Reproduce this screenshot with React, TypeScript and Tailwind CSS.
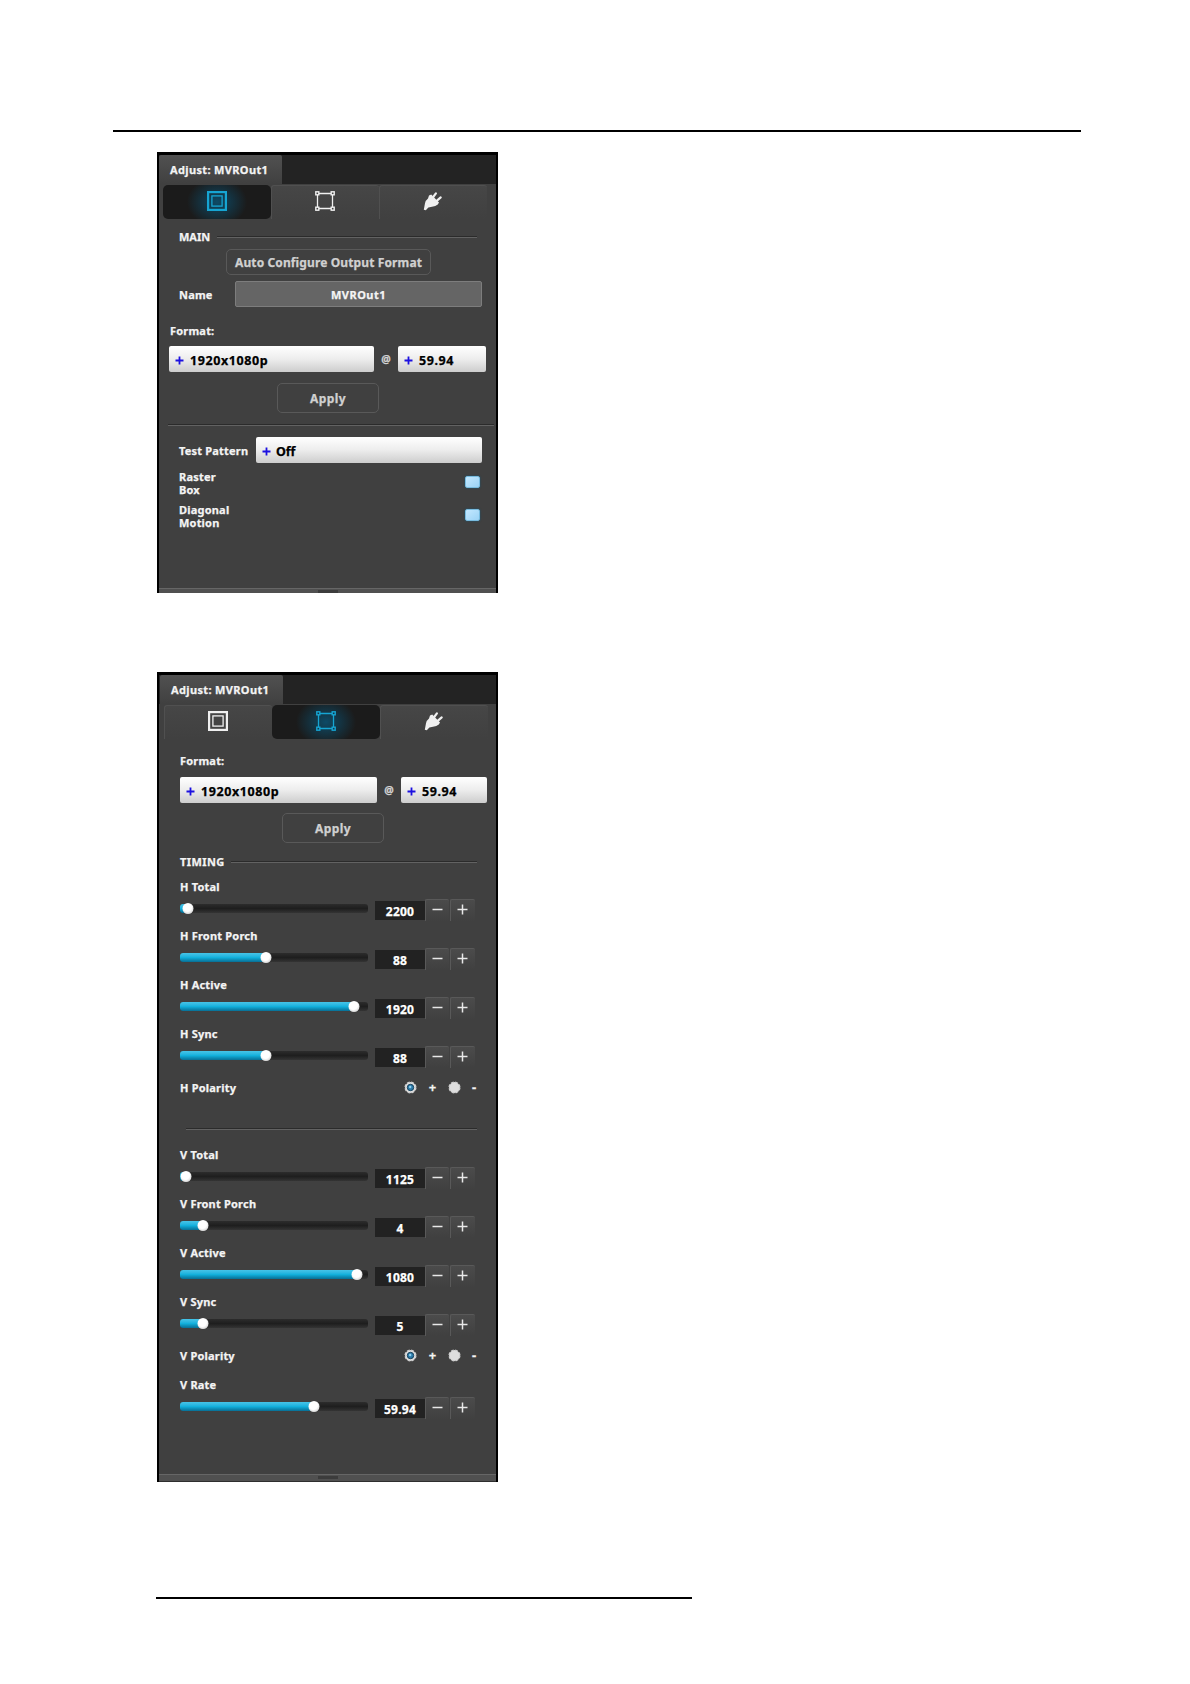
import * as React from "react"
import clsx from "clsx"

type Tab = "main" | "timing" | "link"

const tabs: Tab[] = ["main", "timing", "link"]

interface SliderData {
  label: string
  value: string
  // thumb centre, px from the start of the track
  pos: number
}

const horizontal: SliderData[] = [
  { label: "H Total", value: "2200", pos: 7.5 },
  { label: "H Front Porch", value: "88", pos: 86 },
  { label: "H Active", value: "1920", pos: 174 },
  { label: "H Sync", value: "88", pos: 86 },
]

const vertical: SliderData[] = [
  { label: "V Total", value: "1125", pos: 5.5 },
  { label: "V Front Porch", value: "4", pos: 23 },
  { label: "V Active", value: "1080", pos: 177 },
  { label: "V Sync", value: "5", pos: 23 },
]

function FrameIcon() {
  return (
    <svg width="20" height="20" viewBox="0 0 20 20" fill="none" stroke="currentColor">
      <rect x="1.1" y="1.1" width="17.8" height="17.8" strokeWidth="2.2" />
      <rect x="4.9" y="4.9" width="10.2" height="10.2" strokeWidth="1.3" />
    </svg>
  )
}

function CornersIcon() {
  return (
    <svg width="20" height="20" viewBox="0 0 20 20" fill="none" stroke="currentColor">
      <path d="M4 2.5h12M4 17.5h12M2.5 4v12M17.5 4v12" strokeWidth="1.3" />
      <rect x="0.8" y="0.8" width="3" height="3" strokeWidth="1.4" />
      <rect x="16.2" y="0.8" width="3" height="3" strokeWidth="1.4" />
      <rect x="0.8" y="16.2" width="3" height="3" strokeWidth="1.4" />
      <rect x="16.2" y="16.2" width="3" height="3" strokeWidth="1.4" />
    </svg>
  )
}

function PlugIcon() {
  return (
    <svg width="20" height="20" viewBox="0 0 20 20" fill="currentColor">
      <path d="M.8 18.8L2 12.2Q2.6 9.2 5 7.4L6 4.6 8.2 3.6 16 11.4 14.8 13.4Q12.6 15.400 9 15.8L5.4 16.6 2.8 19.2z" />
      <path d="M10.2 6l2.7-3.7M14 9.600l3.7-3.2" stroke="currentColor" strokeWidth="2.2" strokeLinecap="round" />
    </svg>
  )
}

const icons = { main: FrameIcon, timing: CornersIcon, link: PlugIcon }

function Panel({ active, className, children }: { active: Tab; className?: string; children: React.ReactNode }) {
  return (
    <section
      className={clsx(
        "flex w-[341px] flex-col overflow-hidden border-x-2 border-t-[3px] border-black bg-[#404040] text-[11px] leading-[13px] font-bold tracking-[0.2px] text-[#f4f4f4] [-webkit-text-stroke:0.25px]",
        className
      )}
    >
      <div className="flex h-[29px] shrink-0 bg-[#232323]">
        <div
          className={clsx(
            "flex h-full w-[123px] items-center rounded-t-[2px] bg-linear-to-b from-[#515151] to-[#404040] pl-[11px] tracking-[0.35px]",
            active === "timing" && "ml-px"
          )}
        >
          Adjust: MVROut1
        </div>
      </div>

      <div className={clsx("mt-px flex h-[34px] shrink-0", active === "main" ? "ml-[4px]" : "ml-[5px]")}>
        {tabs.map((tab) => {
          const Icon = icons[tab]
          return (
            <div
              key={tab}
              className={clsx(
                "flex w-[108px] justify-center",
                tab === active
                  ? "rounded-[5px] bg-[#1b1b1b] bg-[radial-gradient(ellipse_30px_24px_at_50%_50%,#0d4a66,#1b1b1b)] pt-[6px] pr-px text-[#16a5d3]"
                  : "rounded-t-[3px] border-t border-l border-[#505050] bg-linear-to-b from-[#464646] to-[#404040] pt-[5px] text-[#f0f0f0]",
                tab !== active && (tab === "link" ? "pr-px" : "pr-[2px]")
              )}
            >
              <Icon />
            </div>
          )
        })}
      </div>

      {children}

      <div
        className={clsx(
          "mt-auto flex shrink-0 justify-center border-t border-[#666] bg-[#505050]",
          active === "main" ? "h-[5px]" : "h-[8px] border-b border-b-[#2e2e2e]"
        )}
      >
        <div className="mt-px h-[3px] w-[20px] bg-[#3c3c3c]" />
      </div>
    </section>
  )
}

function Divider({ className }: { className?: string }) {
  return <div className={clsx("h-[2px] border-t border-b border-t-[#2b2b2b] border-b-[#626262]", className)} />
}

function Select({ value, className }: { value: string; className?: string }) {
  return (
    <div
      className={clsx(
        "flex h-[26px] items-center rounded-[2px] bg-linear-to-b from-white via-[#ededed] to-[#cdcdcd] pl-[6px] text-[12.5px] text-black",
        className
      )}
    >
      <svg width="9" height="9" viewBox="0 0 9 9" className="mt-[3px] mr-[6px] text-[#1c10e0]">
        <path d="M4.5 .5v8M.5 4.5h8" stroke="currentColor" strokeWidth="1.800" />
      </svg>
      <span className={clsx("pt-[2px]", value === "Off" ? "-ml-px tracking-[-0.1px]" : "tracking-[0.6px]")}>
        {value}
      </span>
    </div>
  )
}

function Apply({ className }: { className?: string }) {
  return (
    <button
      className={clsx(
        "block h-[30px] w-[102px] rounded-[5px] border border-[#595959] text-[12px] font-bold tracking-[0.4px] text-[#d0d0d0]",
        className
      )}
    >
      Apply
    </button>
  )
}

function StepButton({ plus }: { plus?: boolean }) {
  return (
    <button
      className={clsx(
        "flex h-[22px] rounded-t-[2px] border-t border-l border-[#595959] bg-linear-to-b from-[#4b4b4b] to-[#404040] pt-[4px] pl-[6px]",
        plus ? "w-[25px]" : "w-[24px]"
      )}
    >
      <svg width="11" height="11" viewBox="0 0 11 11" stroke="#e8e8e8" strokeWidth="1.5">
        <path d={plus ? "M.5 5.5h10M5.5 .5v10" : "M.5 5.5h10"} />
      </svg>
    </button>
  )
}

function Slider({ label, value, pos }: SliderData) {
  return (
    <div className="h-[48.9px]">
      <div>{label}</div>
      <div className="mt-[6px] flex h-[23px]">
        <div className="relative mt-[5px] h-[9px] w-[188px] rounded-[3px] bg-linear-to-b from-[#2c2c2c] via-[#1e1e1e] to-[#343434]">
          <div
            className="h-full rounded-l-[3px] bg-linear-to-b from-[#45c4e8] via-[#12b0dc] to-[#086f95]"
            style={{ width: pos }}
          />
          <div
            className="absolute -top-[1px] h-[11px] w-[11px] -translate-x-1/2 rounded-full bg-[radial-gradient(circle_at_45%_40%,#ffffff_45%,#b4b4b4)]"
            style={{ left: pos }}
          />
        </div>
        <div className="mt-[2px] ml-[7px] h-[19px] w-[50px] bg-[#222] pt-[4px] text-center text-[12px] tracking-[0.25px] text-white">
          {value}
        </div>
        <div className="flex gap-[1px]">
          <StepButton />
          <StepButton plus />
        </div>
      </div>
    </div>
  )
}

function Radio({ checked }: { checked?: boolean }) {
  return (
    <svg width="13" height="13" viewBox="0 0 13 13">
      <circle cx="6.5" cy="6.5" r="5.4" fill="#dedede" stroke="#cfcfcf" strokeWidth="1.3" strokeDasharray="2.8 1.44" />
      {checked && <circle cx="6.5" cy="6.5" r="3.2" fill="#2b7bab" stroke="#173f58" strokeWidth="1" />}
      {checked && <circle cx="6.2" cy="6" r="1.2" fill="#8fd0ee" />}
    </svg>
  )
}

function Polarity({ label }: { label: string }) {
  return (
    <div className="flex h-[14px] items-center">
      <span className="w-[224px]">{label}</span>
      <Radio checked />
      <span className="w-[31px] text-center text-[13px]">+</span>
      <Radio />
      <span className="ml-[11px] text-[13px]">-</span>
    </div>
  )
}

function CheckRow({ lines }: { lines: [string, string] }) {
  return (
    <div className="flex h-[33px] w-[301px] justify-between">
      <div>
        {lines[0]}
        <br />
        {lines[1]}
      </div>
      <div className="mt-[6px] h-[12px] w-[15px] rounded-[2px] border border-[#78bbdf] bg-linear-to-br from-[#c3e8ff] to-[#9bd3f6] shadow-[0_0_2px_#185878]" />
    </div>
  )
}

function MainPanel() {
  return (
    <Panel active="main" className="h-[441px]">
      <div className="mt-[11px] ml-[20px] flex items-center">
        <span className="w-[38px] tracking-normal">MAIN</span>
        <Divider className="w-[260px]" />
      </div>
      <button className="mt-[6px] ml-[67px] h-[26px] w-[205px] shrink-0 rounded-[5px] border border-[#595959] text-[12px] font-bold tracking-[0.12px] whitespace-nowrap text-[#d0d0d0]">
        Auto Configure Output Format
      </button>
      <div className="mt-[6px] ml-[20px] flex items-center">
        <span className="w-[56px]">Name</span>
        <div className="h-[26px] w-[247px] rounded-[2px] border border-[#7d7d7d] bg-[#656565] pt-[6px] text-center tracking-[0.5px]">
          MVROut1
        </div>
      </div>

      <div className="mt-[17px] ml-[11px]">Format:</div>
      <div className="mt-[9px] ml-[10px] flex items-center">
        <Select value="1920x1080p" className="w-[205px]" />
        <span className="w-[24px] text-center text-[10.5px] text-[#d4d4d4]">@</span>
        <Select value="59.94" className="w-[88px]" />
      </div>
      <Apply className="mt-[11px] ml-[118px] shrink-0" />
      <Divider className="mt-[11px] ml-[9px] w-[326px] shrink-0" />

      <div className="mt-[11px] ml-[20px] flex items-center">
        <span className="w-[77px]">Test Pattern</span>
        <Select value="Off" className="w-[226px]" />
      </div>
      <div className="mt-[7px] ml-[20px]">
        <CheckRow lines={["Raster", "Box"]} />
        <CheckRow lines={["Diagonal", "Motion"]} />
      </div>
    </Panel>
  )
}

function TimingPanel() {
  return (
    <Panel active="timing" className="mt-[79px] h-[810px]">
      <div className="mt-[15px] ml-[21px]">Format:</div>
      <div className="mt-[10px] ml-[21px] flex items-center">
        <Select value="1920x1080p" className="w-[197px]" />
        <span className="w-[24px] text-center text-[10.5px] text-[#d4d4d4]">@</span>
        <Select value="59.94" className="w-[86px]" />
      </div>
      <Apply className="mt-[10px] ml-[123px] shrink-0" />

      <div className="mt-[12px] ml-[21px] flex items-center">
        <span className="w-[51px] tracking-[0.4px]">TIMING</span>
        <Divider className="w-[246px]" />
      </div>
      <div className="mt-[12px] ml-[21px]">
        {horizontal.map((s) => (
          <Slider key={s.label} {...s} />
        ))}
        <div className="mt-[5px]">
          <Polarity label="H Polarity" />
        </div>
        <Divider className="mt-[33px] ml-[6px] w-[291px]" />
        <div className="mt-[18.5px]">
          {vertical.map((s) => (
            <Slider key={s.label} {...s} />
          ))}
        </div>
        <div className="mt-[4.5px]">
          <Polarity label="V Polarity" />
        </div>
        <div className="mt-[16px]">
          <Slider label="V Rate" value="59.94" pos={134} />
        </div>
      </div>
    </Panel>
  )
}

export default function App() {
  return (
    <main className="h-[1684px] w-[1190px] overflow-hidden bg-white pt-[130px] font-['Noto_Sans',sans-serif]">
      <div className="ml-[113px] h-[2px] w-[968px] bg-black" />
      <div className="mt-[20px] ml-[157px]">
        <MainPanel />
        <TimingPanel />
      </div>
      <div className="mt-[115px] ml-[156px] h-[2px] w-[536px] bg-black" />
    </main>
  )
}
